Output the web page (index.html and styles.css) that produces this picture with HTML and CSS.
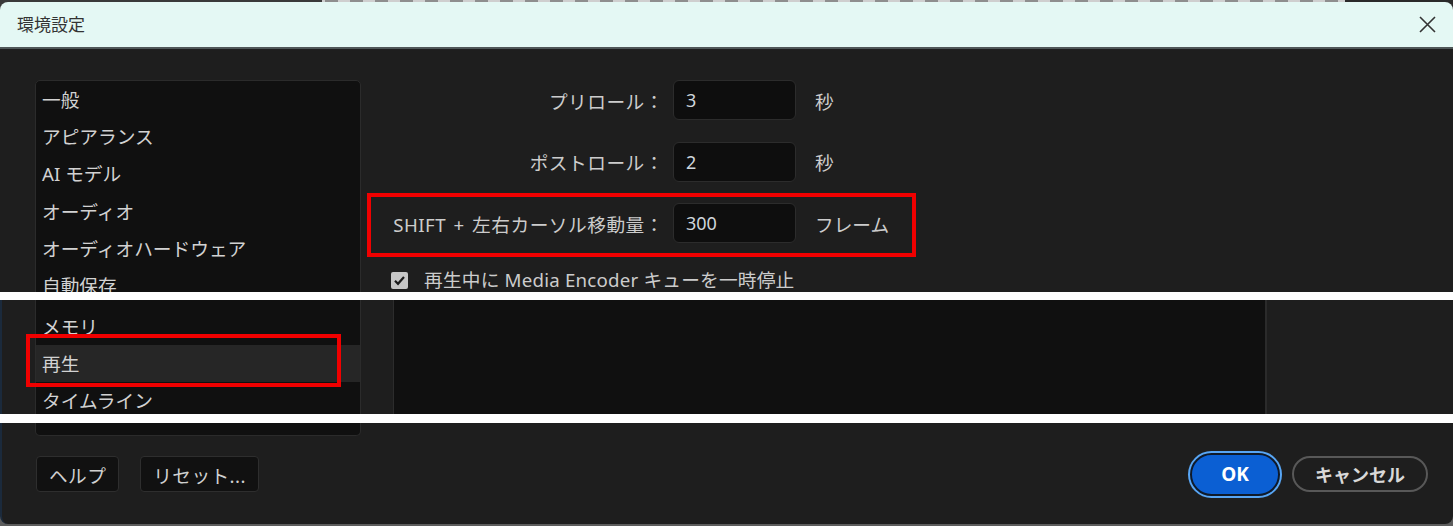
FILE: index.html
```html
<!DOCTYPE html>
<html lang="ja">
<head>
  <meta charset="UTF-8" />
  <title>環境設定</title>
  <link rel="stylesheet" href="styles.css">
</head>
<body>
  <section class="shot shot-top">
    <div class="titlebar">
      <span class="title">環境設定</span>
      <button class="close-button" aria-label="閉じる">
        <svg width="17" height="17" viewBox="0 0 17 17"><path d="M1 1L16 16M16 1L1 16" stroke="#333" stroke-width="1.6" fill="none"/></svg>
      </button>
    </div>
    <div class="pane">
      <ul class="category-list list-head">
        <li>一般</li>
        <li>アピアランス</li>
        <li>AI モデル</li>
        <li>オーディオ</li>
        <li>オーディオハードウェア</li>
        <li>自動保存</li>
      </ul>
      <div class="settings">
        <div class="field">
          <span class="field-label">プリロール：</span>
          <input class="field-input" type="text" value="3">
          <span class="field-unit">秒</span>
        </div>
        <div class="field">
          <span class="field-label">ポストロール：</span>
          <input class="field-input" type="text" value="2">
          <span class="field-unit">秒</span>
        </div>
        <div class="field marked">
          <span class="field-label">SHIFT + 左右カーソル移動量：</span>
          <input class="field-input" type="text" value="300">
          <span class="field-unit">フレーム</span>
        </div>
        <label class="check-row">
          <span class="checkbox">
            <svg width="13" height="13" viewBox="0 0 13 13"><path d="M2 6.8L5 9.8L11 3" stroke="#1a1a1a" stroke-width="2.2" fill="none"/></svg>
          </span>
          <span>再生中に Media Encoder キューを一時停止</span>
        </label>
      </div>
    </div>
  </section>

  <section class="shot shot-mid">
    <div class="pane pane-mid">
      <ul class="category-list list-body">
        <li>メモリ</li>
        <li class="selected marked">再生</li>
        <li>タイムライン</li>
      </ul>
      <div class="sub-panel"></div>
    </div>
  </section>

  <section class="shot shot-bottom">
    <div class="dialog-foot">
      <div class="list-tail"></div>
      <div class="footer">
        <div class="button-group">
          <button class="plain-button">ヘルプ</button>
          <button class="plain-button">リセット...</button>
        </div>
        <div class="button-group right">
          <button class="ok-button">OK</button>
          <button class="cancel-button">キャンセル</button>
        </div>
      </div>
    </div>
  </section>
</body>
</html>
```

FILE: styles.css
```css
html, body {
  margin: 0;
  padding: 0;
  background-color: #ffffff;
}

body {
  width: 1453px;
  height: 526px;
  overflow: hidden;
  font-family: "Noto Sans", "Noto Sans CJK JP", sans-serif;
  color: #d0d0d0;
}

.shot {
  overflow: hidden;
}

/* top strip: title bar + first part of the dialog */
.shot-top {
  height: 292px;
  display: flex;
  flex-direction: column;
  background:
    linear-gradient(90deg, #3a3a3a 0 322px, transparent 322px 1345px, #2a2a2a 1345px),
    repeating-linear-gradient(90deg, #8e8e8e 0 13px, #cfcfcf 13px 25px);
}

.titlebar {
  margin-top: 2px;
  height: 45px;
  flex-shrink: 0;
  background-color: #e4f8f4;
  border-bottom: 2px solid #4f5758;
  border-radius: 8px 8px 0 0;
  display: flex;
  align-items: center;
  justify-content: space-between;
  padding: 0 17px;
}

.title {
  font-size: 17px;
  color: #333333;
  line-height: 1;
}

.close-button {
  background: none;
  border: none;
  padding: 0;
  display: flex;
  cursor: pointer;
}

.pane {
  flex: 1;
  display: flex;
  align-items: flex-start;
  background-color: #1e1e1e;
  padding: 31px 0 0 35px;
}

.category-list {
  list-style: none;
  margin: 0;
  width: 326px;
  flex-shrink: 0;
  box-sizing: border-box;
  background-color: #101010;
  border: 1px solid #2b2b2b;
}

.list-head {
  height: 260px;
  padding: 0;
  border-radius: 5px 5px 0 0;
}

.category-list li {
  height: 37.2px;
  line-height: 37px;
  padding-left: 6px;
  font-size: 18.7px;
  color: #d2d2d2;
  white-space: nowrap;
}

.settings {
  flex: 1;
  display: flex;
  flex-direction: column;
  gap: 21.5px;
}

.field {
  display: grid;
  grid-template-columns: 312px 123px auto;
  align-items: center;
  height: 40px;
}

.field-label {
  text-align: right;
  padding-right: 9px;
  font-size: 18.7px;
  color: #cccccc;
  white-space: nowrap;
  word-spacing: 2px;
  letter-spacing: 0.5px;
}

.field-input {
  width: 123px;
  height: 40px;
  box-sizing: border-box;
  background-color: #0e0e0e;
  border: 1px solid #2c2c2c;
  border-radius: 6px;
  color: #cfd6dc;
  font-family: inherit;
  font-size: 18px;
  padding: 0 12px;
  outline: none;
}

.field-unit {
  padding-left: 19px;
  font-size: 18.7px;
  color: #cccccc;
}

.marked {
  position: relative;
}

.field.marked::after {
  content: "";
  position: absolute;
  left: 6px;
  top: -10px;
  width: 549px;
  height: 64px;
  border: 4px solid #f00000;
  box-sizing: border-box;
}

.check-row {
  margin-top: 6.5px;
  padding-left: 30px;
  display: flex;
  align-items: center;
  gap: 16px;
  font-size: 18.7px;
  color: #cccccc;
  line-height: 18px;
  letter-spacing: 0.2px;
}

.checkbox {
  width: 17px;
  height: 17px;
  border-radius: 2px;
  background-color: #c6c6c6;
  display: flex;
  align-items: center;
  justify-content: center;
}

/* middle strip: end of the category list */
.shot-mid {
  height: 114px;
  margin-top: 8px;
  background-color: #1e1e1e;
  border-left: 2px solid #1b2a3c;
}

.pane-mid {
  height: 100%;
  padding: 0 0 0 33px;
  box-sizing: border-box;
}

.list-body {
  height: 100%;
  padding: 8px 0 0;
  border-top: none;
  border-bottom: none;
}

.category-list li.selected {
  background-color: #262626;
}

.category-list li.marked::after {
  content: "";
  position: absolute;
  left: -10px;
  top: -11px;
  width: 315px;
  height: 53px;
  border: 4px solid #f00000;
  box-sizing: border-box;
}

.sub-panel {
  margin-left: 32px;
  width: 874px;
  height: 100%;
  box-sizing: border-box;
  background-color: #101010;
  border-left: 1px solid #2c2c2c;
  border-right: 2px solid #2b2b2b;
}

/* bottom strip: footer buttons */
.shot-bottom {
  height: 103px;
  margin-top: 9px;
  background-color: #5d5d5d;
}

.dialog-foot {
  height: 101px;
  background-color: #1e1e1e;
  border-left: 2px solid #1b2a3c;
  border-radius: 0 0 8px 8px;
}

.list-tail {
  margin-left: 33px;
  width: 326px;
  height: 13px;
  box-sizing: border-box;
  background-color: #101010;
  border: 1px solid #2b2b2b;
  border-top: none;
  border-radius: 0 0 5px 5px;
}

.footer {
  margin-top: 15px;
  height: 46px;
  display: flex;
  align-items: center;
  justify-content: space-between;
  padding: 0 25px 0 34px;
}

.button-group {
  display: flex;
  align-items: center;
  gap: 21px;
}

.button-group.right {
  gap: 12px;
}

button {
  font-family: inherit;
  cursor: pointer;
}

.plain-button {
  height: 36px;
  padding: 0 12px;
  background-color: #111111;
  border: 1px solid #2e2e2e;
  border-radius: 4px;
  color: #d0d0d0;
  font-size: 18.7px;
  letter-spacing: 0.4px;
}

.ok-button {
  width: 90px;
  height: 43px;
  border-radius: 22px;
  background-color: #0b5fd3;
  border: 2px solid #0f1a2a;
  box-shadow: 0 0 0 2px #58a6f5;
  color: #ffffff;
  font-size: 19px;
  font-weight: 700;
}

.cancel-button {
  height: 36px;
  padding: 0 21px;
  border-radius: 18px;
  background-color: transparent;
  border: 2px solid #585858;
  color: #d8d8d8;
  font-size: 18px;
  font-weight: 700;
}
```
